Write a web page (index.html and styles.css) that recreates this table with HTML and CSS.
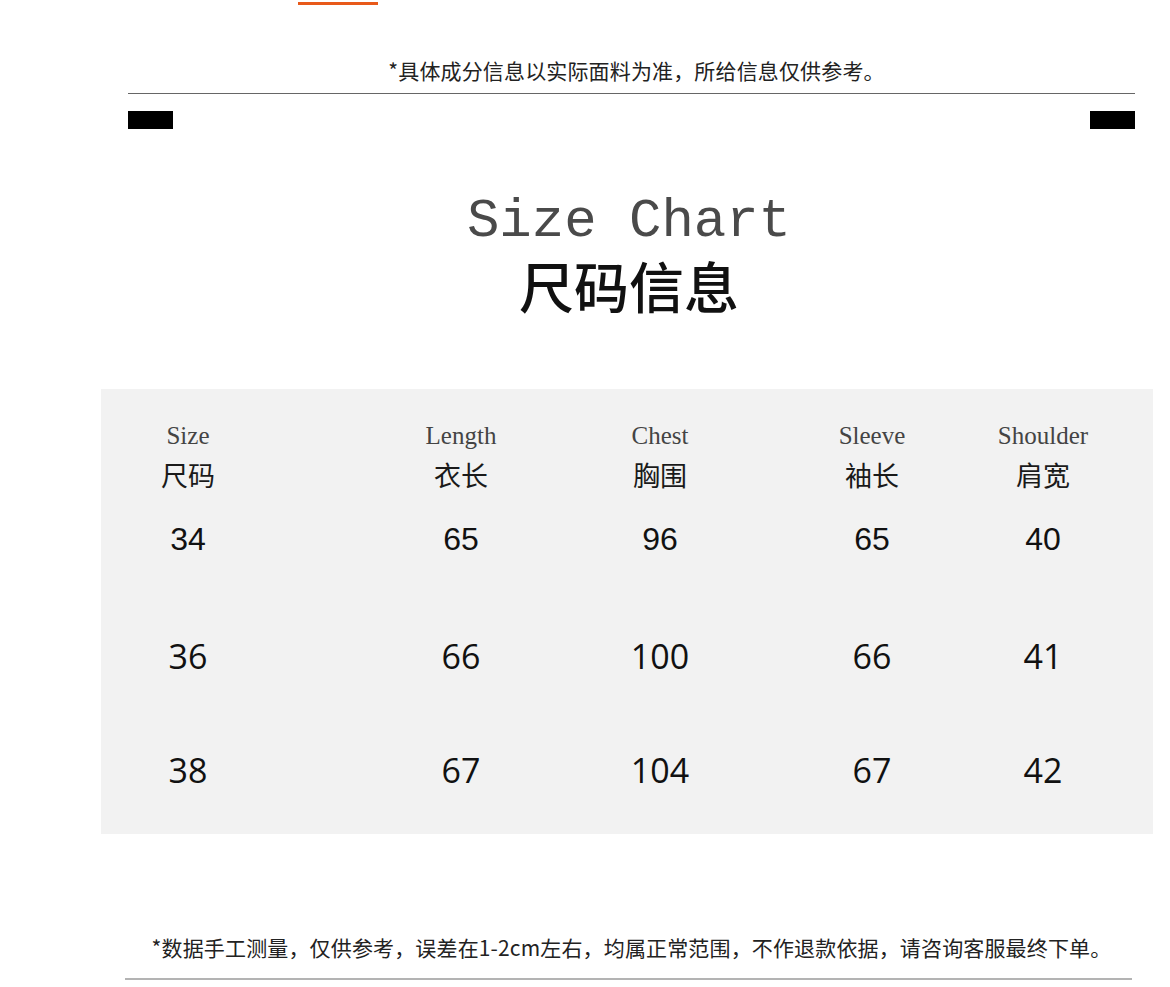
FILE: index.html
```html
<!DOCTYPE html>
<html lang="zh-CN">
<head>
<meta charset="utf-8">
<title>Size Chart 尺码信息</title>
<link rel="stylesheet" href="styles.css">
</head>
<body>
<div class="page">
  <div class="accent"></div>

  <p class="notice">*具体成分信息以实际面料为准，所给信息仅供参考。</p>

  <div class="markers">
    <span class="marker"></span>
    <span class="marker"></span>
  </div>

  <h1 class="title">
    <span class="title-en">Size Chart</span>
    <span class="title-cn">尺码信息</span>
  </h1>

  <section class="chart">
    <div class="row head">
      <div class="cell"><span class="en">Size</span><span class="cn">尺码</span></div>
      <div class="cell"><span class="en">Length</span><span class="cn">衣长</span></div>
      <div class="cell"><span class="en">Chest</span><span class="cn">胸围</span></div>
      <div class="cell"><span class="en">Sleeve</span><span class="cn">袖长</span></div>
      <div class="cell"><span class="en">Shoulder</span><span class="cn">肩宽</span></div>
    </div>
    <div class="row data first">
      <div class="cell">34</div>
      <div class="cell">65</div>
      <div class="cell">96</div>
      <div class="cell">65</div>
      <div class="cell">40</div>
    </div>
    <div class="row data second">
      <div class="cell">36</div>
      <div class="cell">66</div>
      <div class="cell">100</div>
      <div class="cell">66</div>
      <div class="cell">41</div>
    </div>
    <div class="row data third">
      <div class="cell">38</div>
      <div class="cell">67</div>
      <div class="cell">104</div>
      <div class="cell">67</div>
      <div class="cell">42</div>
    </div>
  </section>

  <p class="footnote">*数据手工测量，仅供参考，误差在1-2cm左右，均属正常范围，不作退款依据，请咨询客服最终下单。</p>
</div>
</body>
</html>
```

FILE: styles.css
```css
* {
  box-sizing: border-box;
}

html, body {
  margin: 0;
  padding: 0;
  background: #ffffff;
}

body {
  font-family: "Noto Sans CJK SC", "Noto Sans", sans-serif;
  color: #222;
}

.page {
  width: 1170px;
  height: 987px;
  overflow: hidden;
}

.accent {
  margin: 2px 0 0 298px;
  width: 80px;
  height: 3px;
  background: #e8591a;
}

.notice {
  margin: 53px 0 0 128px;
  width: 1007px;
  padding: 0 0 11px 10px;
  border-bottom: 1px solid #666;
  text-align: center;
  font-size: 21px;
  line-height: 24px;
  letter-spacing: 0.15px;
  color: #222;
}

.markers {
  display: flex;
  justify-content: space-between;
  margin: 17px 0 0 128px;
  width: 1007px;
}

.marker {
  display: block;
  width: 45px;
  height: 18px;
  background: #000;
}

.title {
  margin: 63px 0 0 0;
  display: flex;
  flex-direction: column;
  align-items: center;
  padding-left: 88px;
  font-weight: normal;
}

.title-en {
  font-family: "Liberation Mono", monospace;
  font-size: 54px;
  line-height: 60px;
  color: #4a4a4a;
}

.title-cn {
  margin-top: 2px;
  font-family: "Noto Sans CJK SC", sans-serif;
  font-size: 55px;
  line-height: 60px;
  font-weight: 500;
  color: #111;
}

.chart {
  margin: 75px 0 0 101px;
  width: 1052px;
  height: 445px;
  background: #f2f2f2;
  padding: 33px 0 0 27px;
}

.row {
  display: grid;
  grid-template-columns: 120px 153px 120px 79px 120px 92px 120px 51px 120px;
}

.row .cell:nth-child(1) { grid-column: 1; }
.row .cell:nth-child(2) { grid-column: 3; }
.row .cell:nth-child(3) { grid-column: 5; }
.row .cell:nth-child(4) { grid-column: 7; }
.row .cell:nth-child(5) { grid-column: 9; }

.cell {
  display: flex;
  flex-direction: column;
  align-items: center;
  white-space: nowrap;
}

.head .en {
  font-family: "Liberation Serif", serif;
  font-size: 25px;
  line-height: 28px;
  color: #444;
}

.head .cn {
  margin-top: 10px;
  font-family: "Noto Sans CJK SC", sans-serif;
  font-size: 27px;
  line-height: 30px;
  color: #1a1a1a;
}

.data {
  color: #111;
}

.data.first {
  margin-top: 31px;
  font-family: "Liberation Sans", sans-serif;
  font-size: 32px;
  line-height: 36px;
}

.data.second,
.data.third {
  font-family: "Open Sans", sans-serif;
  font-size: 34px;
  line-height: 36px;
}

.data.second {
  margin-top: 81px;
}

.data.third {
  margin-top: 78px;
}

.footnote {
  margin: 101px 0 0 125px;
  width: 1007px;
  padding: 0 0 19px 6px;
  border-bottom: 2px solid #b3b3b3;
  text-align: center;
  font-size: 21px;
  line-height: 24px;
  letter-spacing: 0.15px;
  color: #222;
}
```
